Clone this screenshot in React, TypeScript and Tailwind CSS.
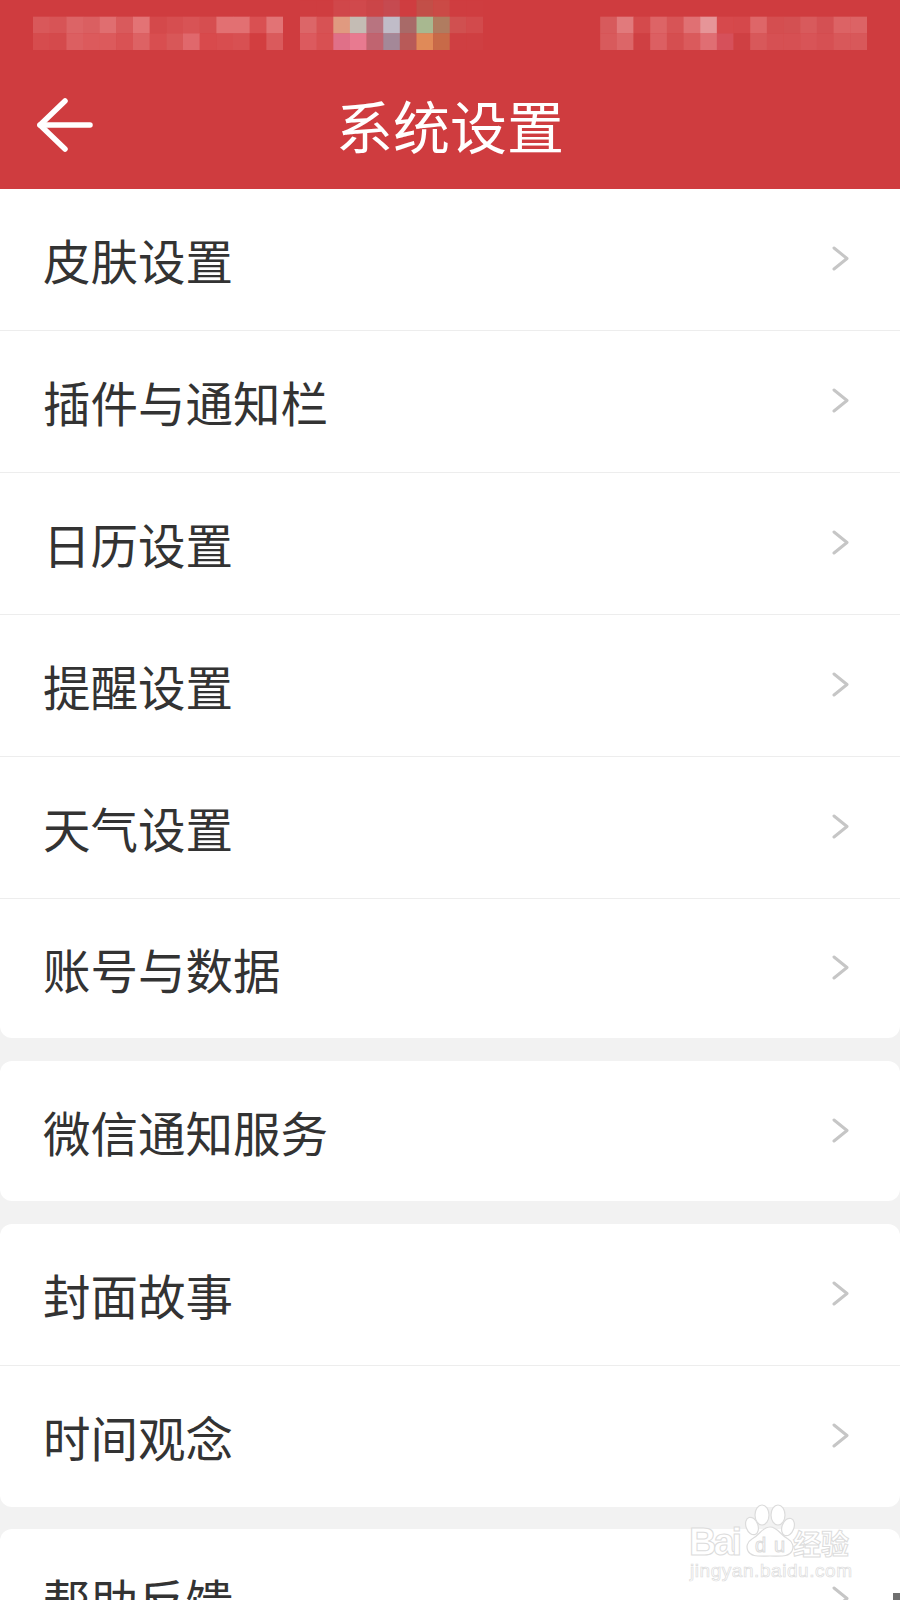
const font = "font-['Noto_Sans_CJK_SC','Noto_Sans',sans-serif]";

// pixelated status bar, one array per row of blocks
const leftBlocks = [
  [],
  ["#d9585a", "#d75456", "#dc6466", "#da5f61", "#e06e70", "#d95a5c", "#e37375", "#d4494b", "#d64e50", "#d85355", "#d64e50", "#e27072", "#e27072", "#d95052", "#e27375"],
  ["#d64c4e", "#d44a4c", "#dc5f61", "#dc5a5c", "#dc5a5c", "#d95254", "#dd6264", "#d84e50", "#d85758", "#e0686c", "#d84a4c", "#d84d4f", "#d85052", "#d23e40", "#da5a5c"],
];
const midBlocks = [
  ["#cf3d40", "#cf3d40", "#d0474a", "#d0494c", "#cb4548", "#c64a50", "#cf3d40", "#c24f48", "#cb4a46", "#cf3d40", "#cf3d40"],
  ["#dc6668", "#d75254", "#e09a80", "#c4bcb4", "#b87480", "#c0bcc8", "#a86a68", "#a8b890", "#b07c60", "#d05050", "#d24a4c"],
  ["#dc5a5e", "#d85052", "#e07088", "#e87a90", "#c06470", "#a48898", "#b85a58", "#e08a58", "#c86a48", "#cf3f42", "#cf3f42"],
];
const rightBlocks = [
  [],
  ["#d75a5c", "#e17a7c", "#d44a4c", "#dd6466", "#d75456", "#e07073", "#e69598", "#d6494c", "#d5484b", "#de6668", "#d44e50", "#d35052", "#d85a5c", "#d45053", "#dc6365", "#dc6365"],
  ["#d85a5c", "#dc6668", "#cf4043", "#dc5f62", "#d54e50", "#da5a5c", "#e06e73", "#d6505a", "#cf4043", "#d8585a", "#d65053", "#d65053", "#d85457", "#d65053", "#d8585a", "#d8585a"],
];

function Mosaic({ rows, className }: { rows: string[][]; className: string }) {
  const size = 16.67;
  const count = rows[1].length;
  return (
    <svg className={className} viewBox={`0 0 ${count * size} ${size * 3}`}>
      {rows.map((row, y) =>
        row.map((fill, x) => (
          <rect key={`${x}-${y}`} x={x * size} y={y * size} width={size + 0.3} height={size + 0.3} fill={fill} />
        ))
      )}
    </svg>
  );
}

function Row({ label, last, height = "h-[141px]" }: { label: string; last?: boolean; height?: string }) {
  return (
    <div className={`flex items-center justify-between pl-[43px] pr-[51px] ${height} ${last ? "" : "border-b border-[#ededed] box-content"}`}>
      <span className="text-[47.5px] leading-none text-[#333333] pt-[1px]">{label}</span>
      <svg className="w-[17px] h-[25px] mb-[2px] text-[#c6c6c6]" viewBox="0 0 17 25" fill="none" stroke="currentColor" strokeWidth="3" strokeLinecap="round" strokeLinejoin="round">
        <polyline points="2,2 15,12.5 2,23" />
      </svg>
    </div>
  );
}

function Watermark() {
  const stroke = "#dcdcdc";
  return (
    <svg className="absolute left-[680px] top-[1495px] w-[180px] h-[95px]" viewBox="0 0 180 95">
      <g fill="#ffffff" stroke={stroke} strokeWidth="1.2">
        <ellipse cx="82" cy="20" rx="7" ry="10" />
        <ellipse cx="98" cy="20" rx="7" ry="10" />
        <ellipse cx="72" cy="31" rx="6" ry="9" transform="rotate(-20 72 31)" />
        <ellipse cx="108" cy="32" rx="6" ry="9" transform="rotate(20 108 32)" />
        <path d="M90 32c-8 0-10 8-18 12-5 3-6 8-4 12 3 6 10 5 22 5s19 1 22-5c2-4 1-9-4-12-8-4-10-12-18-12z" />
      </g>
      <g fill="#ffffff" stroke={stroke} strokeWidth="1" fontFamily="'Liberation Sans', sans-serif">
        <text x="9" y="60" fontSize="38" fontWeight="700" textLength="53">Bai</text>
        <text x="75" y="57" fontSize="20" textLength="30">du</text>
        <text x="113" y="60" fontSize="28" fontWeight="700" textLength="56" fontFamily="'Noto Sans CJK SC', sans-serif">经验</text>
        <text x="10" y="82" fontSize="19" strokeWidth="0.7" textLength="162">jingyan.baidu.com</text>
      </g>
    </svg>
  );
}

export default function App() {
  return (
    <div className={`relative w-[900px] h-[1600px] overflow-hidden bg-[#f2f2f2] ${font}`}>
      <header className="bg-[#cf3c3f] h-[189px] flex flex-col">
        <div className="flex h-[68px] pl-[33px]">
          <Mosaic rows={leftBlocks} className="w-[250px] h-[50px] blur-[0.6px]" />
          <Mosaic rows={midBlocks} className="w-[183px] h-[50px] ml-[17px] blur-[0.6px]" />
          <Mosaic rows={rightBlocks} className="w-[267px] h-[50px] ml-[117px] blur-[0.6px]" />
        </div>
        <div className="grid grid-cols-[1fr_auto_1fr] items-center flex-1 px-[36px] pb-[8px]">
          <svg className="w-[60px] h-[56px] text-white" viewBox="0 0 60 56" fill="none" stroke="currentColor" strokeWidth="5.5" strokeLinecap="round" strokeLinejoin="round">
            <polyline points="29,4 4,28 29,52" />
            <line x1="4" y1="28" x2="54" y2="28" />
          </svg>
          <h1 className="text-[57px] leading-none font-normal text-white">系统设置</h1>
          <div />
        </div>
      </header>

      <section className="bg-white rounded-b-[12px]">
        <Row label="皮肤设置" />
        <Row label="插件与通知栏" />
        <Row label="日历设置" />
        <Row label="提醒设置" />
        <Row label="天气设置" />
        <Row label="账号与数据" last height="h-[139px]" />
      </section>

      <section className="bg-white rounded-[12px] mt-[23px]">
        <Row label="微信通知服务" last height="h-[140px]" />
      </section>

      <section className="bg-white rounded-[12px] mt-[23px]">
        <Row label="封面故事" />
        <Row label="时间观念" last />
      </section>

      <section className="bg-white rounded-t-[12px] mt-[22px]">
        <Row label="帮助反馈" last />
      </section>

      <Watermark />
      <div className="absolute right-0 bottom-0 w-[7px] h-[7px] bg-[#6f6f6f]" />
    </div>
  );
}
